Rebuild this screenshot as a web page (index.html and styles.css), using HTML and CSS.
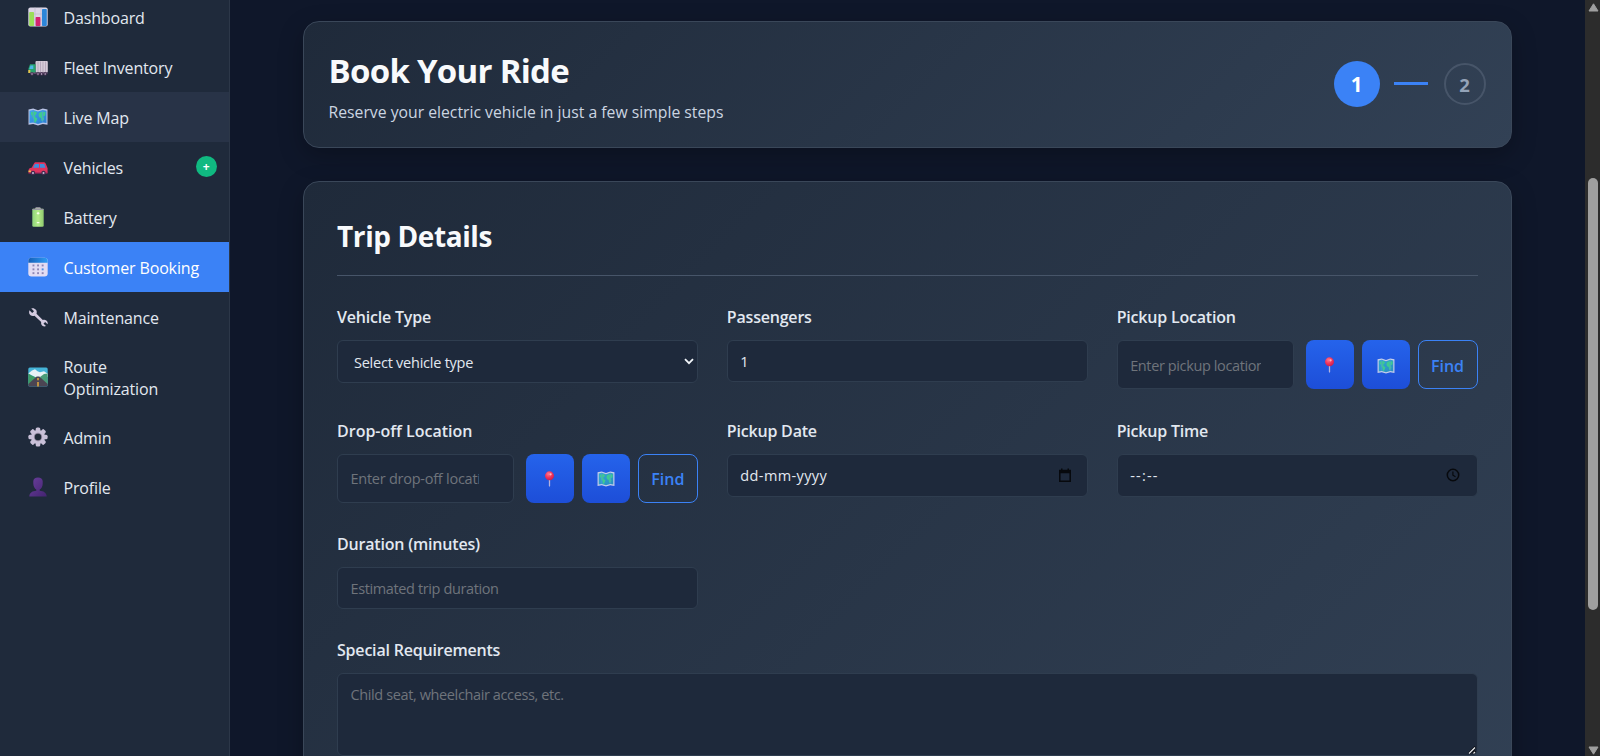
FILE: index.html
```html
<!DOCTYPE html>
<html lang="en">
<head>
<meta charset="utf-8">
<title>Book Your Ride</title>
<link rel="stylesheet" href="styles.css">
</head>
<body>
<svg class="defs" width="0" height="0" aria-hidden="true">
  <defs>
    <linearGradient id="teal" x1="0" y1="0" x2="1" y2="1"><stop offset="0" stop-color="#31a6d6"/><stop offset="1" stop-color="#2b8fc0"/></linearGradient>
    <linearGradient id="sea" x1="0" y1="0" x2="1" y2="1"><stop offset="0" stop-color="#3fa4ee"/><stop offset="1" stop-color="#2a7fd0"/></linearGradient>
    <linearGradient id="person" x1="0" y1="0" x2="1" y2="1"><stop offset="0" stop-color="#6a3f9c"/><stop offset="1" stop-color="#432370"/></linearGradient>
    <linearGradient id="cell" x1="0" y1="0" x2="1" y2="0"><stop offset="0" stop-color="#8fd47c"/><stop offset=".5" stop-color="#b4ec88"/><stop offset="1" stop-color="#8fc96f"/></linearGradient>
    <linearGradient id="caltop" x1="0" y1="0" x2="1" y2="0"><stop offset="0" stop-color="#1560b8"/><stop offset="1" stop-color="#2f9cf5"/></linearGradient>
    <radialGradient id="ball" cx=".4" cy=".3" r=".7"><stop offset="0" stop-color="#ff7a90"/><stop offset=".5" stop-color="#f5395f"/><stop offset="1" stop-color="#c81e50"/></radialGradient>
    <symbol id="land" viewBox="0 0 20 18">
      <path d="M3 4.300l3.500-1 2.400 1.200-.8 2-1.400 1.200.9 1.700 1.700 1.100-.7 2.200-1.200 2-1-.3-.3-3-1.500-1.700-.4-2L3 6.500zM11 5.200l2.500-1.500 4 .2-.3 3.500-1.900 1.100.9 2.500-1.500 2.600-1.300-.8-.4-2.800-1.700-.8-.8-2z" fill="#3ecb90"/>
      <path d="M5.300 2v12.500M14.700 2v12.500" stroke="#4f9bdc" stroke-width=".8"/>
    </symbol>
    <symbol id="map" viewBox="0 0 20 18">
      <path d="M.5 1.500 5.200.6 10 2.200 14.800.6l4.700.9v15.300l-4.700-.8L10 17.500l-4.800-1.500-4.700.8z" fill="#c6cdea"/>
      <path d="M1.800 2.700 5.300 2 10 3.600 14.700 2l3.500.7v12.400l-3.500-.6-4.700 1.400-4.700-1.400-3.500.6z" fill="url(#teal)"/>
      <use href="#land"/>
    </symbol>
    <symbol id="pin" viewBox="0 0 12 18">
      <path d="M5.300 8h1.400v7.500L6 17.500l-.7-2z" fill="#b5b3dd"/>
      <circle cx="6" cy="5" r="4.900" fill="url(#ball)"/>
      <circle cx="7.200" cy="3.300" r="1.200" fill="#ffb3bd"/>
    </symbol>
  </defs>
</svg>
<div class="app">
  <nav class="sidebar">
    <a class="item"><svg class="ico" viewBox="0 0 20 20"><rect x=".3" y=".5" width="19.400" height="19" rx="2" fill="#dcd6e6"/><path d="M.5 7h19M.5 13h19M7 .5v19M13 .5v19" stroke="#bfb6cc" stroke-width=".6"/><rect x="1.200" y="5" width="4.800" height="14" rx=".8" fill="#9adf58"/><rect x="7.600" y="10" width="4.800" height="9" rx=".8" fill="#d3246f"/><rect x="14" y="2" width="4.800" height="17" rx=".8" fill="#2d86d8"/></svg><span>Dashboard</span></a>
    <a class="item"><svg class="ico low" viewBox="0 0 20 20"><rect x="7.500" y="3" width="12.300" height="11.500" rx="1" fill="#d6cbd9"/><path d="M10 3.500v11M12.500 3.500v11M15 3.500v11M17.500 3.500v11" stroke="#a99bb0" stroke-width=".7"/><path d="M2 6.200h5.500V15H.5v-4.500z" fill="#28a46e"/><path d="M2.500 7.500h2.800V11H1.300z" fill="#4fb6e8"/><path d="M.3 12h2v3h-2z" fill="#e7c24b"/><path d="M2 14.500h17.500v1.300H2z" fill="#6b4a72"/><g fill="#45304f"><circle cx="4" cy="16" r="1.700"/><circle cx="10" cy="16" r="1.700"/><circle cx="13.600" cy="16" r="1.700"/><circle cx="17.200" cy="16" r="1.700"/></g><g fill="#d3c6df"><circle cx="4" cy="16" r=".7"/><circle cx="10" cy="16" r=".7"/><circle cx="13.600" cy="16" r=".7"/><circle cx="17.200" cy="16" r=".7"/></g></svg><span>Fleet Inventory</span></a>
    <a class="item hover"><svg class="ico map" viewBox="0 0 20 18"><path d="M.5 1.500 5.200.6 10 2.200 14.800.6l4.700.9v15.300l-4.700-.8L10 17.500l-4.800-1.500-4.700.8z" fill="#b9c3e6"/><path d="M1.500 2.700 5.300 2 10 3.600 14.700 2l3.800.7v12.400l-3.800-.6-4.700 1.400-4.700-1.400-3.800.6z" fill="url(#sea)"/><use href="#land"/></svg><span>Live Map</span></a>
    <a class="item"><svg class="ico low" viewBox="0 0 20 20"><path d="M6 5.500c.4-.8 1-1.200 2-1.200h7.500c1.200 0 2 .5 2.400 1.600l1.700 4.300v4.800H.6v-2.600c0-1.500 1-2.300 3-2.600z" fill="#e0355f"/><path d="M7 6h4v3.700H5zM12 6h4.200l1.300 3.700H12z" fill="#3e8ede"/><path d="M.5 12.500h2.400v1.700H.5z" fill="#f1c64c"/><path d="M.5 14.500h19v1.200H.5z" fill="#93265a"/><circle cx="5" cy="15" r="2.200" fill="#422c50"/><circle cx="15.500" cy="15" r="2.200" fill="#422c50"/><circle cx="5" cy="15" r="1" fill="#c8bbd5"/><circle cx="15.500" cy="15" r="1" fill="#c8bbd5"/></svg><span>Vehicles</span><b class="badge">+</b></a>
    <a class="item"><svg class="ico" viewBox="0 0 20 20"><rect x="7.300" y=".3" width="5.400" height="3" rx="1" fill="#a9a2b0"/><rect x="4.300" y="1.700" width="11.400" height="18" rx="1.300" fill="url(#cell)"/><rect x="4.300" y="1.700" width="11.400" height="1.300" rx=".6" fill="#9b9aa5"/><path d="M8.800 6.300h2.600M10.100 5v2.600M8.800 15.600h2.600" stroke="#f4ffe9" stroke-width="1.200"/></svg><span>Battery</span></a>
    <a class="item active"><svg class="ico" viewBox="0 0 20 20"><rect x=".3" y=".8" width="19.400" height="18.700" rx="3.200" fill="#e2dcf3"/><path d="M.3 5.800V4A3.200 3.200 0 0 1 3.500.8h13A3.200 3.200 0 0 1 19.700 4v1.800z" fill="url(#caltop)"/><g fill="#8f87b5"><rect x="4.500" y="7.500" width="1.900" height="1.900"/><rect x="9.100" y="7.500" width="1.900" height="1.900"/><rect x="13.700" y="7.500" width="1.900" height="1.900"/><rect x="4.500" y="11.400" width="1.900" height="1.900"/><rect x="9.100" y="11.400" width="1.900" height="1.900"/><rect x="13.700" y="11.400" width="1.900" height="1.900" fill="#4a8fe0"/><rect x="4.500" y="15.200" width="1.900" height="1.900"/><rect x="9.100" y="15.200" width="1.900" height="1.900"/><rect x="13.700" y="15.200" width="1.900" height="1.900"/></g></svg><span>Customer Booking</span></a>
    <a class="item"><svg class="ico" viewBox="0 0 20 20"><path d="M3.300 1.500 6 4.200 4.200 6 1.500 3.300C.6 5.500 1.200 7.300 2.500 8.300c1.200.9 2.600 1 4 .5l6.700 6.300c-.4 1.500.1 2.900 1.200 3.700 1.200.9 2.500.9 3.600.3L15.500 16.700l1.600-1.800 2.500 2.300c.4-1.600-.2-3-1.300-3.800-1.100-.7-2.300-.8-3.500-.3L8.500 6.800c.5-1.500.3-3-.6-4-1.200-1.400-2.900-1.900-4.600-1.300z" fill="#d4cbe0"/></svg><span>Maintenance</span></a>
    <a class="item tall"><svg class="ico" viewBox="0 0 20 20"><rect x=".3" y=".5" width="19.400" height="19" rx="1.500" fill="#45b4d8"/><path d="M.3 6.500 4 3.500l3-1.200 2.500 2 2.500 1 4-1 3.700 2.500v3L12 11 8 10.500z" fill="#e8f2f4"/><path d="M12 10l4-3 3.700-.5v11h-5z" fill="#4a9c78"/><path d="M.3 6.500 3.500 8.500 8 10.500 4 15 .3 18z" fill="#3f9b63"/><path d="M8.700 9.500h2.600l8.400 7.500v1c0 .9-.6 1.500-1.500 1.500H1.800c-.9 0-1.500-.6-1.500-1.500v-1z" fill="#4b4553"/><path d="M10 11v2.200M10 15v4.500" stroke="#e5ab3c" stroke-width="1.500"/></svg><span>Route<br>Optimization</span></a>
    <a class="item"><svg class="ico" viewBox="0 0 20 20"><g fill="#c9c0d8"><rect x="7.700" y=".4" width="4.600" height="19.200" rx="1.500"/><rect x="7.700" y=".4" width="4.600" height="19.200" rx="1.500" transform="rotate(45 10 10)"/><rect x="7.700" y=".4" width="4.600" height="19.200" rx="1.500" transform="rotate(90 10 10)"/><rect x="7.700" y=".4" width="4.600" height="19.200" rx="1.500" transform="rotate(135 10 10)"/><circle cx="10" cy="10" r="7"/></g><circle cx="10" cy="10" r="4.200" fill="#91879f"/><circle cx="10" cy="10" r="3.200" fill="#1f2937"/></svg><span>Admin</span></a>
    <a class="item"><svg class="ico" viewBox="0 0 20 20"><path d="M5.300 6.500V4.300C5.300 2 7.200.5 10 .5s4.700 1.500 4.700 3.800v2.500c0 2.800-1.500 5-3 5.700v1.300c3.500.2 6.800 1.700 7 5.700H1.300c.2-4 3.500-5.500 7-5.700v-1.300c-1.500-.7-3-3-3-6z" fill="url(#person)"/></svg><span>Profile</span></a>
  </nav>

  <main class="content">
    <section class="card hero">
      <div>
        <h1>Book Your Ride</h1>
        <p>Reserve your electric vehicle in just a few simple steps</p>
      </div>
      <div class="steps"><span class="step on">1</span><i class="bar"></i><span class="step">2</span></div>
    </section>

    <section class="card form">
      <h2>Trip Details</h2>
      <div class="grid">
        <div class="field"><label>Vehicle Type</label>
          <div class="control select"><span>Select vehicle type</span><svg width="10" height="7" viewBox="0 0 10 7"><path d="M1 1.200 5 5.200 9 1.200" fill="none" stroke="#f1f5f9" stroke-width="1.800"/></svg></div></div>
        <div class="field"><label>Passengers</label><input class="control" value="1"></div>
        <div class="field"><label>Pickup Location</label>
          <div class="locate"><input class="control" placeholder="Enter pickup location"><button class="btn"><svg width="11" height="17"><use href="#pin"/></svg></button><button class="btn"><svg width="18" height="16"><use href="#map"/></svg></button><button class="btn find">Find</button></div></div>
        <div class="field"><label class="loose">Drop-off Location</label>
          <div class="locate"><input class="control drop" placeholder="Enter drop-off location"><button class="btn"><svg width="11" height="17"><use href="#pin"/></svg></button><button class="btn"><svg width="18" height="16"><use href="#map"/></svg></button><button class="btn find">Find</button></div></div>
        <div class="field"><label>Pickup Date</label>
          <div class="control picker"><span class="date">dd-mm-yyyy</span><svg width="14" height="15" viewBox="0 0 14 15"><path d="M1.800 2.600h10.400v10.600H1.800z" fill="none" stroke="#07090d" stroke-width="1.500"/><path d="M1.500 2h11v3.300h-11zM3 .5h1.500V3H3zM9.500.5H11V3H9.500z" fill="#07090d"/></svg></div></div>
        <div class="field"><label>Pickup Time</label>
          <div class="control picker time"><span class="clock">--:--</span><svg width="14" height="14" viewBox="0 0 14 14"><circle cx="7" cy="7" r="5.700" fill="none" stroke="#07090d" stroke-width="1.500"/><path d="M6.900 3.500v3.700l2.600 1.600" fill="none" stroke="#07090d" stroke-width="1.200"/></svg></div></div>
        <div class="field"><label>Duration (minutes)</label><input class="control" placeholder="Estimated trip duration"></div>
      </div>
      <div class="field wide"><label>Special Requirements</label>
        <div class="area"><span>Child seat, wheelchair access, etc.</span><svg class="grip" width="8" height="8" viewBox="0 0 8 8"><path d="M1 7.500 7.500 1M5 7.500l2.500-2.500" stroke="#0a0d12" stroke-width="2.600"/><path d="M1 7.500 7 1.500M5.500 7.500l1.500-1.500" stroke="#e5e7eb" stroke-width="1.300"/></svg></div></div>
    </section>
  </main>

  <div class="scroll">
    <svg width="11" height="9" viewBox="0 0 11 9"><path d="M5.500.8 10 8H1z" fill="#9f9f9f" stroke="#9f9f9f" stroke-linejoin="round"/></svg>
    <i class="thumb"></i>
    <svg width="11" height="9" viewBox="0 0 11 9"><path d="M5.500 8.200 10 1H1z" fill="#9f9f9f" stroke="#9f9f9f" stroke-linejoin="round"/></svg>
  </div>
</div>
</body>
</html>
```
FILE: styles.css
```css
* { box-sizing: border-box; }
body {
  margin: 0;
  height: 756px;
  overflow: hidden;
  background: #0f172a;
  color: #e2e8f0;
  font-family: "Open Sans", "Noto Sans", sans-serif;
}
.defs { display: block; height: 0; }
.app { display: flex; height: 756px; overflow: hidden; }

/* sidebar */
.sidebar {
  width: 229.500px;
  flex: none;
  margin-top: -8px;
  background: #1f2a3b;
  border-right: 1px solid #2c3748;
}
.item {
  display: flex;
  align-items: center;
  height: 50px;
  padding: 0 12px 0 28px;
  font-size: 16px;
  line-height: 22.500px;
  letter-spacing: -0.150px;
}
.item span { flex: 1; padding-top: 2px; white-space: nowrap; }
.item.tall { height: 70px; }
.item.hover { background: #283347; }
.item.active { background: #3b82f6; color: #fff; }
.ico { width: 20px; height: 20px; margin-right: 15.500px; flex: none; }
.ico.map { height: 18px; }
.ico.low { margin-top: 2px; }
.badge {
  width: 21px;
  height: 21px;
  margin-top: -1px;
  border-radius: 50%;
  background: #10b981;
  color: #fff;
  font-size: 12px;
  line-height: 22px;
  text-align: center;
}

/* main column */
.content { flex: 1; padding: 21px 73.500px 0 73px; }
.card {
  border: 1px solid #3a4759;
  border-radius: 16px;
  background: linear-gradient(135deg, #1f2a3a 0%, #324155 100%);
  box-shadow: 0 8px 24px rgba(0, 0, 0, .25);
}
.hero {
  display: flex;
  justify-content: space-between;
  height: 127px;
  padding: 27px 25px 0 25px;
}
h1 {
  margin: 0;
  padding-top: 1px;
  color: #f8fafc;
  font-size: 33px;
  line-height: 42px;
  font-weight: 700;
  letter-spacing: -0.720px;
}
.hero p {
  margin: 9px 0 0;
  color: #cbd5e1;
  font-size: 15.750px;
  line-height: 22px;
  letter-spacing: 0;
  white-space: nowrap;
}
.steps { display: flex; align-items: center; height: 70px; }
.step {
  width: 42px;
  height: 42px;
  border: 2px solid #475569;
  border-radius: 50%;
  color: #94a3b8;
  font-size: 18.500px;
  font-weight: 700;
  line-height: 39px;
  text-align: center;
}
.step.on {
  width: 46px;
  height: 46px;
  border: 0;
  background: #3b82f6;
  color: #fff;
  font-size: 20.500px;
  line-height: 47px;
}
.bar { width: 34px; height: 3px; margin: -1px 16px 0 14px; background: #3b82f6; }

.form { height: 680px; margin-top: 33px; padding: 36px 33px 0 33.500px; }
h2 {
  margin: 0 0 32px;
  padding-bottom: 20px;
  border-bottom: 1px solid #475569;
  color: #f8fafc;
  font-size: 28px;
  line-height: 37px;
  font-weight: 700;
  letter-spacing: -0.400px;
}
.grid {
  display: grid;
  grid-template-columns: repeat(3, 1fr);
  gap: 32.500px 29px;
  align-items: start;
}
.field { min-width: 0; }
.field.wide { margin-top: 32px; }
label {
  display: block;
  margin-bottom: 13.500px;
  font-size: 16px;
  line-height: 18.500px;
  font-weight: 600;
  letter-spacing: -0.200px;
}
label.loose { letter-spacing: 0; }
.control {
  display: flex;
  align-items: center;
  width: 100%;
  height: 42px;
  padding: 0 12.500px;
  border: 1px solid #2f3d4f;
  border-radius: 6px;
  background: #1e293b;
  color: #e2e8f0;
  font-family: inherit;
  font-size: 14.500px;
  letter-spacing: -0.240px;
  outline: 0;
}
.control::placeholder { color: #6f747b; opacity: 1; letter-spacing: -0.380px; }
.control.drop::placeholder { letter-spacing: -0.250px; }
.select { height: 43px; padding: 0 3px 0 16px; justify-content: space-between; }
.select span { padding-top: 1px; }
.picker { height: 43px; padding-right: 15px; justify-content: space-between; }
.date { letter-spacing: .380px; }
.clock { letter-spacing: 1.200px; }
.time { padding-right: 17px; }
.locate { display: flex; gap: 8px; height: 49px; }
.locate .control { flex: 1; min-width: 0; height: 49px; margin-right: 4px; padding-top: 1px; padding-right: 32px; }
.locate .control.drop { padding-right: 34px; }
.btn {
  display: flex;
  align-items: center;
  justify-content: center;
  flex: none;
  width: 48px;
  height: 49px;
  padding: 2px 0 0;
  border: 0;
  border-radius: 8px;
  background: linear-gradient(#2563eb, #1d4ed8);
}
.btn.find {
  width: 60px;
  border: 1px solid #3b82f6;
  background: none;
  color: #3b82f6;
  font: 600 16px "Open Sans", sans-serif;
}
.area {
  position: relative;
  height: 83px;
  padding: 11px 12.500px;
  border: 1px solid #2f3d4f;
  border-radius: 6px;
  background: #1e293b;
  color: #6f747b;
  font-size: 14.500px;
  line-height: 20px;
  letter-spacing: -0.380px;
}
.grip { position: absolute; right: 1px; bottom: 1px; }

/* scrollbar */
.scroll {
  display: flex;
  flex-direction: column;
  align-items: center;
  justify-content: space-between;
  flex: none;
  width: 15px;
  padding: 3px 0 1px 1px;
  background: #2c2c2c;
}
.thumb { width: 10px; height: 432px; margin-top: 30px; border-radius: 5px; background: #9f9f9f; }
```
